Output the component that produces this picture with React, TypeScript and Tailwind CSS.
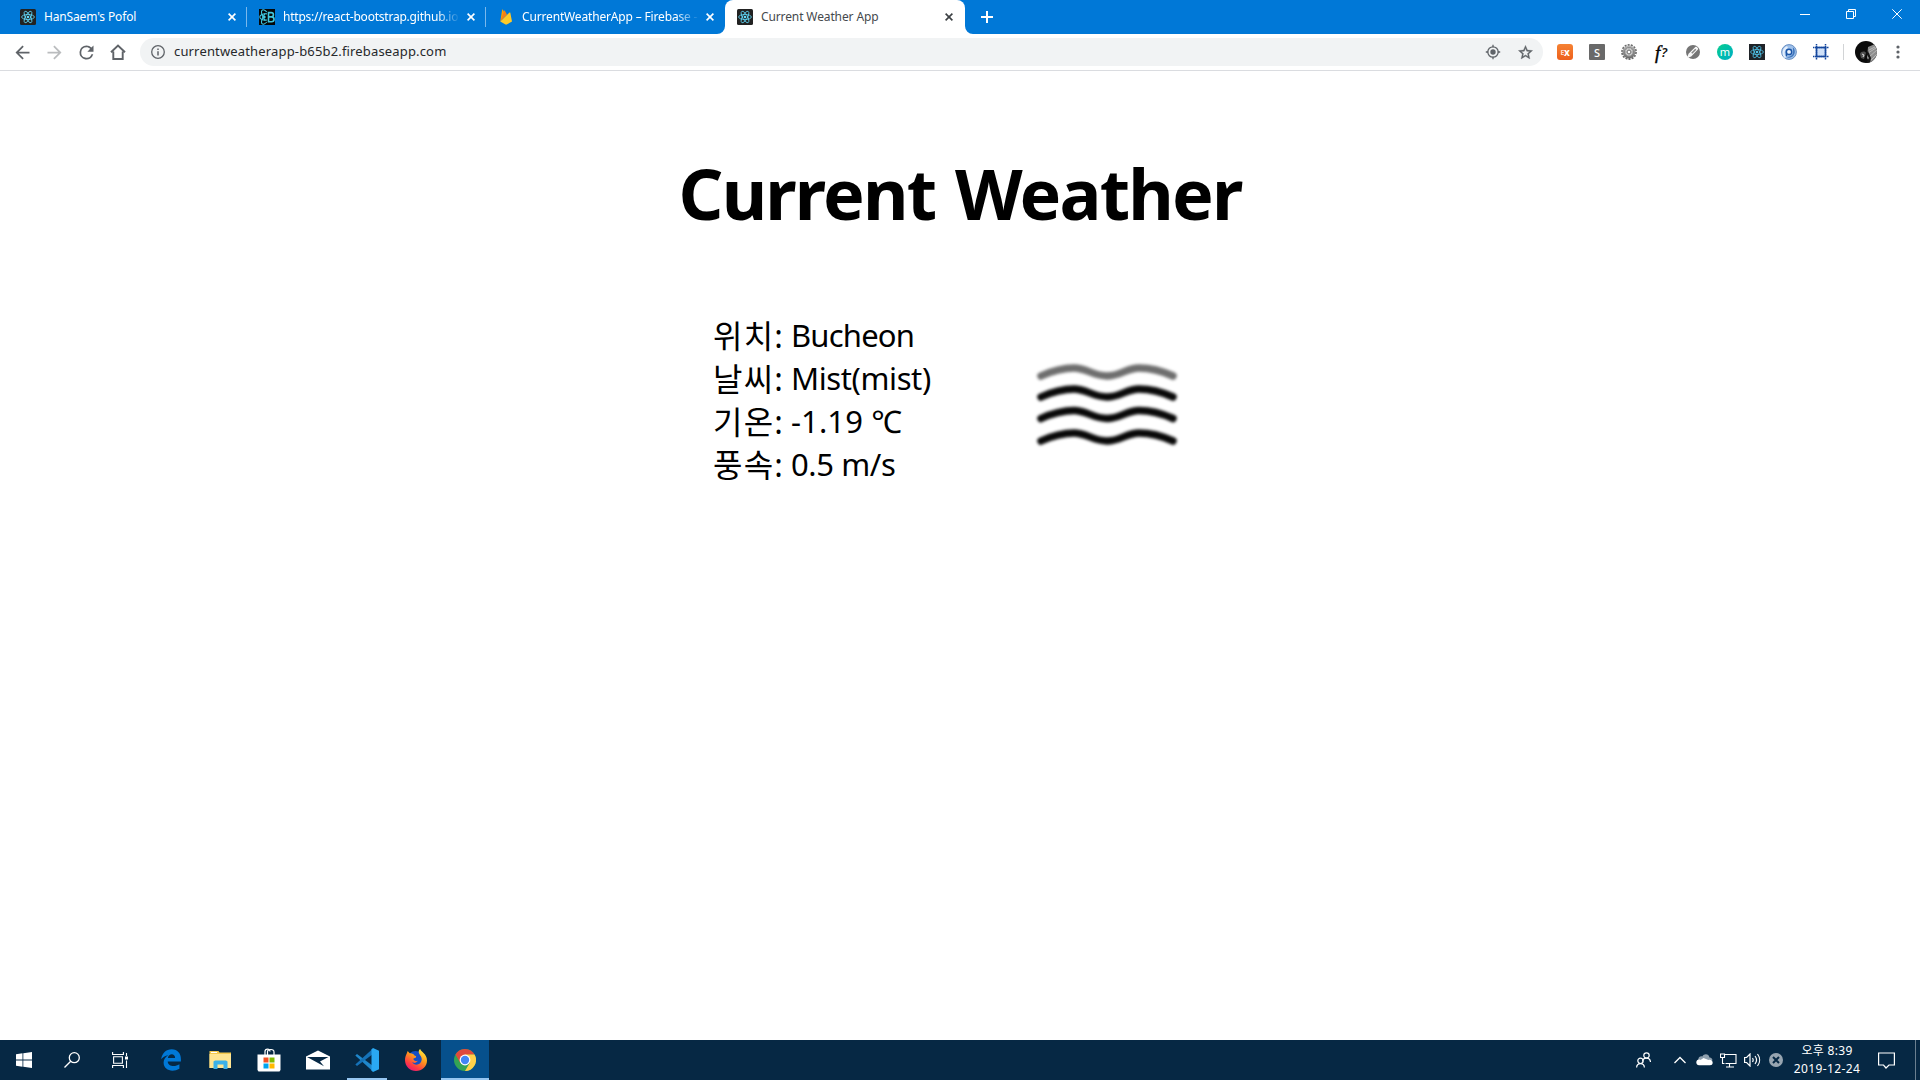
import type { ReactNode } from "react";

function ReactLogo({ bg, color = "#61dafb", square = false }: { bg: string; color?: string; square?: boolean }) {
  return (
    <svg width="16" height="16" viewBox="0 0 16 16" className="block shrink-0">
      <rect width="16" height="16" rx={square ? 0 : 1.5} fill={bg} />
      <g fill="none" stroke={color} strokeWidth="0.8">
        <ellipse cx="8" cy="8" rx="6.4" ry="2.5" />
        <ellipse cx="8" cy="8" rx="6.4" ry="2.5" transform="rotate(60 8 8)" />
        <ellipse cx="8" cy="8" rx="6.4" ry="2.5" transform="rotate(120 8 8)" />
      </g>
      <circle cx="8" cy="8" r="1.3" fill={color} />
    </svg>
  );
}

function BootstrapReactIcon() {
  return (
    <svg width="16" height="16" viewBox="0 0 16 16" className="block shrink-0">
      <rect width="16" height="16" fill="#050708" />
      <g fill="none" stroke="#41c8e0" strokeWidth="1.100">
        <path d="M8 4.900C4 4.400.8 5.800.8 8s3.200 3.500 7.200 3" />
        <path d="M7.800 3C6 1 4 .200 3 1.300 1.600 2.800 3.400 8 6.200 11.600" />
        <path d="M7.800 13C6 15 4 15.800 3 14.700 1.600 13.200 3.400 8 6.200 4.400" />
        <path strokeWidth="1.600" d="M9.500 3.600h2.700c3 0 3 4.300 0 4.300H9.500h3c3.400 0 3.400 4.800 0 4.800h-3z" />
      </g>
      <circle cx="5.500" cy="8" r="1.200" fill="#41c8e0" />
    </svg>
  );
}

function FirebaseIcon() {
  return (
    <svg width="16" height="16" viewBox="0 0 16 16" className="block shrink-0">
      <path d="M2.300 12.600 4.100.900c.1-.4.6-.5.8-.1l1.900 3.600z" fill="#ffa000" />
      <path d="M2.300 12.600 9 5.700 6.900 1.800c-.2-.4-.6-.4-.8 0z" fill="#f57f17" />
      <path d="m2.300 12.600 9.200-9c.3-.3.7-.1.8.2l1.700 8.800-5.300 3c-.4.200-.9.200-1.200 0z" fill="#ffca28" />
    </svg>
  );
}

function CloseX({ color }: { color: string }) {
  return (
    <svg width="8" height="8" viewBox="0 0 8 8" className="block shrink-0">
      <path d="M.6.600 7.400 7.400M7.400.600.600 7.400" stroke={color} strokeWidth="1.600" />
    </svg>
  );
}

function Tab({ icon, title, spacing, fade = false }: { icon: ReactNode; title: string; spacing: string; fade?: boolean }) {
  return (
    <div className="flex h-[34px] w-[239px] items-center pl-3 text-white">
      {icon}
      <span
        className={
          "ml-2 w-[176px] shrink-0 overflow-hidden text-xs whitespace-nowrap " +
          spacing +
          (fade ? " [mask-image:linear-gradient(to_right,#000_154px,transparent_177px)]" : "")
        }
      >
        {title}
      </span>
      <span className="ml-2">
        <CloseX color="#fff" />
      </span>
    </div>
  );
}

function Separator() {
  return <div className="-ml-px h-5 w-px bg-[#7ab8ec]" />;
}

function TabStrip() {
  return (
    <div className="flex h-[34px] items-center bg-[#0078d7]">
      <div className="flex h-full items-center pl-2">
        <Tab icon={<ReactLogo bg="#222222" />} title="HanSaem's Pofol" spacing="tracking-[-0.15px]" />
        <Separator />
        <Tab icon={<BootstrapReactIcon />} title="https://react-bootstrap.github.io" spacing="tracking-[-0.22px]" fade />
        <Separator />
        <Tab icon={<FirebaseIcon />} title="CurrentWeatherApp – Firebase -" spacing="tracking-[-0.16px]" fade />
      </div>
      <div className="relative flex h-[34px] w-[240px] items-center rounded-t-lg bg-white pl-3">
        <svg width="8" height="8" viewBox="0 0 8 8" className="absolute bottom-0 -left-2">
          <path d="M8 0v8H0a8 8 0 0 0 8-8z" fill="#fff" />
        </svg>
        <svg width="8" height="8" viewBox="0 0 8 8" className="absolute -right-2 bottom-0">
          <path d="M0 0v8h8a8 8 0 0 1-8-8z" fill="#fff" />
        </svg>
        <ReactLogo bg="#222222" />
        <span className="ml-2 w-[184px] text-xs tracking-[-0.12px] whitespace-nowrap text-[#45494d]">Current Weather App</span>
        <CloseX color="#3c4043" />
      </div>
      <svg width="12" height="12" viewBox="0 0 12 12" className="ml-4">
        <path d="M6 0v12M0 6h12" stroke="#fff" strokeWidth="2" />
      </svg>
      <div className="ml-auto flex h-full items-start pt-[9px]">
        {["M0 5.500h10", "M.5 2.500h7v7h-7zM2.500 2.500v-2h7v7h-2", "M.3.300l9.400 9.400M9.700.300.300 9.700"].map((d) => (
          <div key={d} className="flex w-[46px] justify-center">
            <svg width="10" height="10" viewBox="0 0 10 10" className="block">
              <path d={d} fill="none" stroke="#fff" strokeWidth="1" />
            </svg>
          </div>
        ))}
      </div>
    </div>
  );
}

function NavIcon({ d, color = "#5f6368" }: { d: string; color?: string }) {
  return (
    <div className="flex w-8 justify-center">
      <svg width="21" height="21" viewBox="0 0 24 24" fill={color} className="block">
        <path d={d} />
      </svg>
    </div>
  );
}

const cell = "flex h-8 w-8 items-center justify-center";

function Extensions() {
  return (
    <div className="flex items-center">
      <div className={cell}>
        <span className="flex h-4 w-4 items-center justify-center rounded-[3px] bg-linear-to-b from-[#f58233] to-[#ee5f1b] text-[10px] leading-none font-bold text-white">
          <span className="text-[7px] opacity-70">E</span>x
        </span>
      </div>
      <div className={cell}>
        <span className="flex h-4 w-4 items-center justify-center rounded-[1px] bg-[#696969] text-[11px] leading-none font-medium text-white">S</span>
      </div>
      <div className={cell}>
        <svg width="16" height="16" viewBox="0 0 16 16">
          <defs>
            <linearGradient id="gear" x1="0" y1="0" x2="0" y2="1">
              <stop offset="0" stopColor="#bcbcbc" />
              <stop offset="1" stopColor="#686868" />
            </linearGradient>
          </defs>
          <circle cx="8" cy="8" r="7" fill="none" stroke="#6c6c6c" strokeWidth="1.800" strokeDasharray="2 1.142" />
          <circle cx="8" cy="8" r="6.500" fill="url(#gear)" />
          <circle cx="8" cy="8" r="4.600" fill="none" stroke="#858585" strokeWidth=".8" />
          <circle cx="8" cy="8" r="3.700" fill="#cfcfcf" />
          <path d="M8 4.500v7M4.500 8h7M5.500 5.500l5 5M10.500 5.500l-5 5" stroke="#969696" strokeWidth=".8" />
          <circle cx="8" cy="8" r="1.800" fill="#fff" stroke="#6c6c6c" strokeWidth=".8" />
        </svg>
      </div>
      <div className={cell}>
        <span className="font-['Liberation_Serif',serif] text-[19px] leading-none text-black italic [-webkit-text-stroke:0.4px_#000]">f</span>
        <span className="ml-px text-[13px] leading-none font-semibold text-[#111] italic">?</span>
      </div>
      <div className={cell}>
        <svg width="16" height="16" viewBox="0 0 16 16">
          <circle cx="8" cy="8" r="7" fill="#757575" />
          <path d="m2 14 1.500-4.300L10.300 3c1-1 3.700 1.500 2.600 2.600L6.200 12.400z" fill="#f7f7f7" />
          <path d="m6.200 8.700 4-4 1.100 1.100-4 4z" fill="#858585" />
        </svg>
      </div>
      <div className={cell}>
        <span className="flex h-4 w-4 items-center justify-center rounded-full bg-linear-to-br from-[#10cd8c] to-[#00adc5] pb-[2px] text-[11px] leading-none text-white">m</span>
      </div>
      <div className={cell}>
        <ReactLogo bg="#1f2328" color="#4fc3ea" square />
      </div>
      <div className={cell}>
        <svg width="16" height="16" viewBox="0 0 16 16">
          <circle cx="8" cy="8" r="7.400" fill="#9fc1ea" stroke="#5f87bd" strokeWidth=".9" />
          <path d="M4.600 13.500C1.500 10.500 1.800 5 6.500 3" stroke="#e4effc" strokeWidth="2" fill="none" />
          <path d="M11.900 3.200c2.900 2.600 2.500 7.900-1.200 9.800-2.200 1.100-4.200.8-5.400-.2 4 .5 6.700-1.500 6.800-4.800 0-1.900-.2-3.400-.200-4.800z" fill="#3f76bd" />
          <circle cx="8" cy="7.900" r="2.700" fill="#f2f8ff" stroke="#1c56a8" strokeWidth="1.500" />
          <path d="M5.500 8.500v3.800" stroke="#1c56a8" strokeWidth="1.400" />
        </svg>
      </div>
      <div className={cell}>
        <svg width="16" height="16" viewBox="0 0 16 16">
          <rect x="3.500" y="3.500" width="9" height="9" fill="#cfe0f8" />
          <path d="M3.500 0v16M12.500 0v16M0 3.500h16M0 12.500h16" stroke="#15479e" strokeWidth="1.500" strokeDasharray="1.500 .5" />
          <path d="M3.500 3.500h9v9h-9z" stroke="#15479e" strokeWidth="1.500" fill="none" />
        </svg>
      </div>
    </div>
  );
}

function Toolbar() {
  return (
    <div className="flex h-[37px] items-center border-b border-[#dadce0] bg-white pl-[6px]">
      <NavIcon d="M20 11H7.830l5.590-5.590L12 4l-8 8 8 8 1.410-1.410L7.830 13H20v-2z" />
      <NavIcon color="#babcbe" d="m12 4-1.410 1.410L16.170 11H4v2h12.170l-5.580 5.590L12 20l8-8z" />
      <NavIcon d="M17.650 6.350A7.958 7.958 0 0 0 12 4a8 8 0 1 0 7.730 10h-2.080A6 6 0 1 1 12 6c1.660 0 3.140.690 4.220 1.780L13 11h7V4l-2.350 2.350z" />
      <div className="flex w-8 justify-center">
        <svg width="16" height="16" viewBox="0 0 16 16" className="block">
          <path d="M1 8.300 8 1.500l7 6.800M3.300 7.400v7.600h9.400V7.400" fill="none" stroke="#5f6368" strokeWidth="1.900" />
        </svg>
      </div>
      <div className="ml-[6px] flex h-7 w-[1403px] items-center rounded-full bg-[#f1f3f4] pl-[11px]">
        <svg width="14" height="14" viewBox="0 0 14 14">
          <circle cx="7" cy="7" r="6.300" fill="none" stroke="#5f6368" strokeWidth="1.300" />
          <path d="M7 6.200v4.200M7 3.500v1.500" stroke="#5f6368" strokeWidth="1.500" />
        </svg>
        <span className="ml-[9px] text-[13px] tracking-[0.16px] text-[#26282b]">currentweatherapp-b65b2.firebaseapp.com</span>
        <div className="ml-auto flex items-center pr-[2px]">
          <div className={cell}>
            <svg width="16" height="16" viewBox="0 0 16 16">
              <circle cx="8" cy="8" r="5.200" fill="none" stroke="#5f6368" strokeWidth="1.300" />
              <circle cx="8" cy="8" r="2.700" fill="#5f6368" />
              <path d="M8 .800v2.400M8 12.800v2.400M.800 8h2.400M12.800 8h2.400" stroke="#5f6368" strokeWidth="1.300" />
            </svg>
          </div>
          <div className={cell}>
            <svg width="17" height="17" viewBox="0 0 24 24" fill="#5f6368">
              <path d="m22 9.240-7.190-.620L12 2 9.190 8.630 2 9.240l5.460 4.730L5.820 21 12 17.270 18.180 21l-1.630-7.030L22 9.240zM12 15.400l-3.760 2.270 1-4.280-3.320-2.880 4.380-.380L12 6.100l1.710 4.040 4.380.380-3.320 2.880 1 4.280L12 15.400z" stroke="#5f6368" strokeWidth=".5" />
            </svg>
          </div>
        </div>
      </div>
      <div className="ml-[6px]">
        <Extensions />
      </div>
      <div className="ml-[6px] h-4 w-px bg-[#d2d4d6]" />
      <svg width="22" height="22" viewBox="0 0 22 22" className="ml-[11px]">
        <defs>
          <clipPath id="avatar">
            <circle cx="11" cy="11" r="11" />
          </clipPath>
        </defs>
        <g clipPath="url(#avatar)">
          <rect width="22" height="22" fill="#0b0b0b" />
          <path d="M13 6 20 3l2 3v12l-7 4-3-5z" fill="#8e8e8e" />
          <path d="m14 9 6-3M13 12l8-5M14 16l8-7M16 19l6-6" stroke="#c4c4c4" strokeWidth=".8" />
          <path d="M5 13c1-3 5-3 6-1l-1 3-1 3-3-1z" fill="#4f4f4f" />
          <path d="m7 13 2 1-1 2" stroke="#ddd" fill="none" strokeWidth="1" />
          <path d="m11 12 3 5-3 5h4l1-5-3-7z" fill="#151515" />
        </g>
      </svg>
      <svg width="4" height="14" viewBox="0 0 4 14" className="ml-[19px]" fill="#5f6368">
        <circle cx="2" cy="2" r="1.600" />
        <circle cx="2" cy="7" r="1.600" />
        <circle cx="2" cy="12" r="1.600" />
      </svg>
    </div>
  );
}

const rows = [
  { label: "위치", value: "Bucheon", spacing: "tracking-[-0.8px]" },
  { label: "날씨", value: "Mist(mist)", spacing: "tracking-[-0.4px]" },
  { label: "기온", value: "-1.19 ℃", spacing: "tracking-[0.1px]" },
  { label: "풍속", value: "0.5 m/s", spacing: "tracking-[-0.4px]" },
];

const waves = [
  { y: 20, color: "#6e6e6e" },
  { y: 41, color: "#080808" },
  { y: 62.5, color: "#080808" },
  { y: 85, color: "#080808" },
];

function MistIcon() {
  return (
    <svg width="148" height="100" viewBox="0 0 148 100" className="blur-[1.4px]">
      {waves.map(({ y, color }) => (
        <path
          key={y}
          transform={`translate(0 ${y})`}
          d="M8 0C18-5 32-8 41-8c12 0 20 8 33 8S94-8 106-8c9 0 23 3 34 8"
          fill="none"
          stroke={color}
          strokeWidth="7.500"
          strokeLinecap="round"
        />
      ))}
    </svg>
  );
}

function Weather() {
  return (
    <main className="flex flex-1 flex-col items-center bg-white text-black">
      <h1 className="mt-[72px] text-[70px] leading-[100px] font-bold tracking-[-1.8px] whitespace-nowrap [word-spacing:3.5px]">Current Weather</h1>
      <div className="mt-[71px] flex w-[536px]">
        <div className="w-[300px] pl-[21px] text-[31px] leading-[43px]">
          {rows.map((row) => (
            <div key={row.label} className="flex h-[43px] whitespace-nowrap">
              <span className="w-[78px] text-[32px] tracking-[1.2px]">{row.label}:</span>
              <span className={row.spacing}>{row.value}</span>
            </div>
          ))}
        </div>
        <div className="mt-[42px] ml-[41px]">
          <MistIcon />
        </div>
      </div>
    </main>
  );
}

function TaskButton({ children, state = "idle" }: { children: ReactNode; state?: "idle" | "open" | "active" }) {
  return (
    <div className={"relative flex h-10 w-12 items-center justify-center " + (state === "active" ? "bg-[#06508c]" : "")}>
      {children}
      {state === "open" && <div className="absolute bottom-0 left-1 h-[2px] w-10 bg-[#96c6f1]" />}
      {state === "active" && <div className="absolute bottom-0 left-0 h-[2px] w-12 bg-[#96c6f1]" />}
    </div>
  );
}

function Taskbar() {
  return (
    <footer className="flex h-10 items-center bg-[#062844]">
      <TaskButton>
        <svg width="16" height="16" viewBox="0 0 16 16" fill="#fff">
          <path d="M0 2.300 6.500 1.300v6.300H0zM7.300 1.200 16 0v7.600H7.300zM0 8.400h6.500v6.300L0 13.700zM7.300 8.400H16V16l-8.700-1.200z" />
        </svg>
      </TaskButton>
      <TaskButton>
        <svg width="16" height="16" viewBox="0 0 16 16" fill="none" stroke="#fff" strokeWidth="1.300">
          <circle cx="10.300" cy="5.700" r="5" />
          <path d="M6.700 9.300.500 15.500" />
        </svg>
      </TaskButton>
      <TaskButton>
        <svg width="17" height="16" viewBox="0 0 17 16" fill="none" stroke="#fff" strokeWidth="1.100">
          <path d="M.6 0v2.500h10.800V0M.6 16v-2.500h10.800V16M1.600 4.700h8.800v6.600H1.600zM14.500 1v3M14.500 8.500V16" />
          <path d="M13 4.500h3v3h-3z" fill="#fff" stroke="none" />
        </svg>
      </TaskButton>
      <div className="ml-[3px] flex gap-px">
        <TaskButton>
          <svg width="20" height="22" viewBox="0 0 20 22" fill="#0078d7">
            <path d="M.2 10.300C1 4.300 5 .300 10.700.300c6 0 9.200 4.500 9.200 9.800v2.400H6.700c.2 5 7.300 5.800 11.700 2.700v4.500C12 23.500 2.600 21.800 2.600 13.600c0-3.500 2-6 4.800-7.400C4 6.600 1.500 8.300.200 10.300zM6.900 9h7.200c.1-5-6.500-4.900-7.200 0z" />
          </svg>
        </TaskButton>
        <TaskButton>
          <svg width="22" height="20" viewBox="0 0 22 20">
            <path d="M.5 1h9l1 1.500H22V18H.500z" fill="#f4c94f" />
            <path d="M2 2h6v1H2z" fill="#fff" />
            <path d="M.5 4H22v14H.500z" fill="#ffe592" />
            <path d="M4.500 19v-7.500L6 10.500h11l1.500 1V19h-4v-4.500h-6V19z" fill="#3bb1e8" />
          </svg>
        </TaskButton>
        <TaskButton>
          <svg width="24" height="24" viewBox="0 0 24 24">
            <path d="M8 7V3.500C8 .300 13 .300 13 3.500M10.500 7V3.500C10.500 1.500 17 0 17 4v3" fill="none" stroke="#fff" strokeWidth="1.200" />
            <path d="M.5 6.500h23V22l-1 1.500h-21L.500 22z" fill="#fff" />
            <path d="M6.500 9.500h5v5h-5z" fill="#f25022" />
            <path d="M12.500 9.500h5v5h-5z" fill="#7fba00" />
            <path d="M6.500 15.500h5v5h-5z" fill="#00a4ef" />
            <path d="M12.500 15.500h5v5h-5z" fill="#ffb900" />
          </svg>
        </TaskButton>
        <TaskButton>
          <svg width="24" height="20" viewBox="0 0 24 20">
            <path d="M0 6.500 12 .500l12 6V19.500H0z" fill="#fff" />
            <path d="M1 7h21.500L14 11.500l4 4.800z" fill="#062844" />
          </svg>
        </TaskButton>
        <TaskButton state="open">
          <svg width="24" height="24" viewBox="0 0 24 24">
            <path d="M.3 7.500 2 6l16 12v5.500z" fill="#1f87cb" />
            <path d="M.3 16.500 2 18 18 6V.500z" fill="#1572b8" />
            <path d="m18 0 6 2.700v18.600L18 24l-1.500-1.500V1.500z" fill="#2aa8f2" />
          </svg>
        </TaskButton>
        <TaskButton>
          <svg width="22" height="22" viewBox="0 0 22 22">
            <defs>
              <linearGradient id="fox" x1=".8" y1="0" x2=".2" y2="1">
                <stop offset="0" stopColor="#ffef3f" />
                <stop offset=".4" stopColor="#ff9a1c" />
                <stop offset=".75" stopColor="#ff3b42" />
                <stop offset="1" stopColor="#e2137f" />
              </linearGradient>
            </defs>
            <circle cx="10.500" cy="10" r="8" fill="#164fc4" />
            <path d="M1.500 5 2.700 2l2 2.300c2-.5 4 .5 4.800 2.200l1.700.8-.5 1.500-2.200.8c-.5 2 2.200 3.200 4.200 2.200-1.200 2.500-4.200 2.500-5.500 1.300 2 4.200 9 3.200 9.500-2.300.2-4-3-5-3-8 0-1.300.5-2.300 1.500-2.800.5 3 6.800 4.500 6.800 11.500 0 6-5 10.500-11 10.500S0 17.500 0 11c0-2.500.7-4.500 1.500-6z" fill="url(#fox)" />
          </svg>
        </TaskButton>
        <TaskButton state="active">
          <svg width="22" height="22" viewBox="0 0 22 22">
            <circle cx="11" cy="11" r="11" fill="#34a353" />
            <path d="M1.470 5.500A11 11 0 0 1 20.530 5.500L11 6 6.200 13.700z" fill="#e0493c" />
            <path d="M20.530 5.500A11 11 0 0 1 11 22l4.800-8.300L11 5.500z" fill="#ffd04a" />
            <circle cx="11" cy="11" r="5.400" fill="#fff" />
            <circle cx="11" cy="11" r="4.200" fill="#4285f4" />
          </svg>
        </TaskButton>
      </div>
      <div className="ml-auto flex h-10 items-center">
        <svg width="15" height="16" viewBox="0 0 15 16" fill="none" stroke="#fff" strokeWidth="1.200">
          <circle cx="10.500" cy="3.500" r="2.700" />
          <path d="M6.500 9.500c.500-4.500 7.500-4.500 8 .500" />
          <circle cx="4.500" cy="8.800" r="2.700" />
          <path d="M.600 15.500c.200-5.300 7.600-5.300 7.800 0" />
        </svg>
        <svg width="12" height="8" viewBox="0 0 12 8" fill="none" stroke="#fff" strokeWidth="1.300" className="ml-[23px]">
          <path d="m.5 7 5.500-5.500L11.500 7" />
        </svg>
        <svg width="17" height="12" viewBox="0 0 17 12" className="ml-[10px]">
          <path d="M2.500 6.500C1.500 3 5 1.500 6.300 2.500 8-1 13-.5 13.500 3.500c2 .2 3 1.500 3 3z" fill="#8fa0ae" />
          <path d="M.3 8.500C.300 6 2.500 5 4.500 6l3-2 5 2c2-.7 4.200.5 4.200 2.800 0 1.700-1.200 2.500-2.700 2.500H3C1.500 11.300.300 10 .300 8.500z" fill="#fff" />
        </svg>
        <svg width="17" height="15" viewBox="0 0 17 15" fill="none" stroke="#fff" strokeWidth="1.100" className="ml-[7px]">
          <path d="M5 1.500h11v9H5.500M9.500 10.500v3.500M6 14h8M.500 1h4v3.500h-4zM2.500 4.500v6h2" />
        </svg>
        <svg width="17" height="14" viewBox="0 0 17 14" fill="none" stroke="#fff" strokeWidth="1.200" className="ml-[7px]">
          <path d="M.6 4.500h2L6 1v12L2.600 9.500h-2zM8.500 5c.8 1.200.8 2.800 0 4M11 3c1.800 2.300 1.800 5.700 0 8M13.500 1c2.800 3.600 2.800 8.400 0 12" />
        </svg>
        <svg width="14" height="14" viewBox="0 0 14 14" className="ml-[8px]">
          <circle cx="7" cy="7" r="7" fill="#97a5b1" />
          <path d="m4 4 6 6M10 4l-6 6" stroke="#062844" strokeWidth="2" />
        </svg>
        <div className="ml-[9px] flex w-[70px] flex-col items-center text-xs leading-[18px] text-white">
          <span className="tracking-[0.3px]">오후 8:39</span>
          <span className="tracking-[0.4px]">2019-12-24</span>
        </div>
        <svg width="17" height="17" viewBox="0 0 17 17" fill="none" stroke="#fff" strokeWidth="1.200" className="ml-4">
          <path d="M.600 1h15.800v12h-5.400L8 16l-2.500-3H.600z" />
        </svg>
        <div className="ml-5 h-10 w-px bg-[#6a7f90]" />
        <div className="w-1" />
      </div>
    </footer>
  );
}

export default function App() {
  return (
    <div className="flex h-screen w-full flex-col overflow-hidden bg-white font-['Noto_Sans','Noto_Sans_CJK_KR',sans-serif]">
      <TabStrip />
      <Toolbar />
      <Weather />
      <Taskbar />
    </div>
  );
}
